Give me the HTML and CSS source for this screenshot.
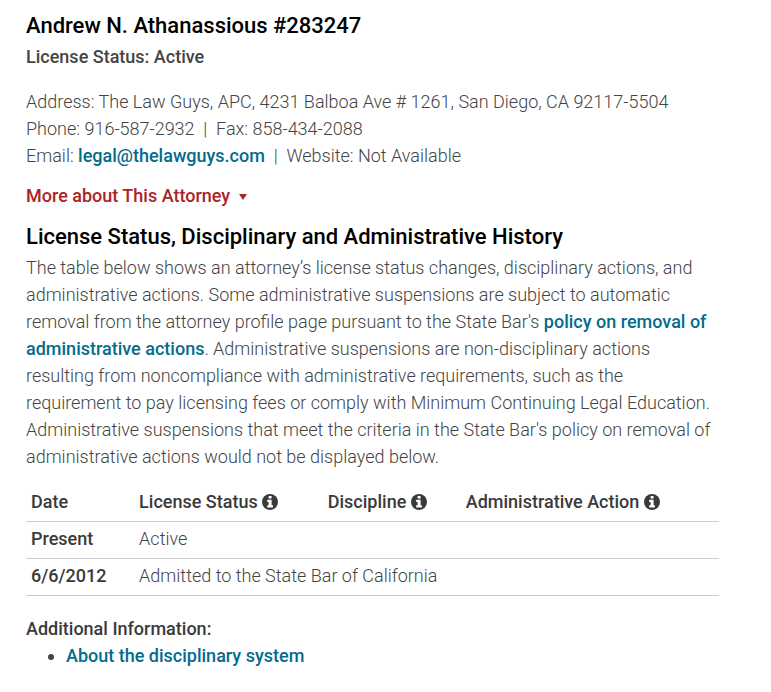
FILE: index.html
```html
<!DOCTYPE html>
<html lang="en">
<head>
    <meta charset="UTF-8">
    <meta name="viewport" content="width=device-width, initial-scale=1.0">
    <title>Attorney Profile</title>
    <link rel="stylesheet" href="styles.css">
</head>
<body>
    <main class="profile">
        <h1 class="title">Andrew N. Athanassious #283247</h1>
        <p class="status">License Status: Active</p>

        <address class="contact">
            <p>Address: The Law Guys, APC, 4231 Balboa Ave # 1261, San Diego, CA 92117-5504</p>
            <p>Phone: 916-587-2932 &nbsp;|&nbsp; Fax: 858-434-2088</p>
            <p>Email: <a href="mailto:legal@thelawguys.com">legal@thelawguys.com</a> &nbsp;|&nbsp; Website: Not Available</p>
        </address>

        <button type="button" class="more">More about This Attorney <span class="caret"></span></button>

        <h2 class="title">License Status, Disciplinary and Administrative History</h2>
        <p class="intro">The table below shows an attorney’s license status changes, disciplinary actions, and administrative actions. Some administrative suspensions are subject to automatic removal from the attorney profile page pursuant to the State Bar's <a href="#">policy on removal of administrative actions</a>. Administrative suspensions are non-disciplinary actions resulting from noncompliance with administrative requirements, such as the requirement to pay licensing fees or comply with Minimum Continuing Legal Education. Administrative suspensions that meet the criteria in the State Bar's policy on removal of administrative actions would not be displayed below.</p>

        <svg class="symbols" aria-hidden="true">
            <symbol id="info" viewBox="0 0 16 16">
                <circle cx="8" cy="8" r="8" fill="#3a3a3a"/>
                <path fill="#fff" d="M6.6 2h3v2.6h-3zM5.2 5.8h4.4v5.4h1.3v2.2H5.2v-2.2h1.4V8H5.2z"/>
            </symbol>
        </svg>

        <table class="history">
            <thead>
                <tr>
                    <th>Date</th>
                    <th>License Status <svg class="info"><use href="#info"/></svg></th>
                    <th>Discipline <svg class="info"><use href="#info"/></svg></th>
                    <th>Administrative Action <svg class="info"><use href="#info"/></svg></th>
                </tr>
            </thead>
            <tbody>
                <tr>
                    <th>Present</th>
                    <td colspan="3">Active</td>
                </tr>
                <tr>
                    <th>6/6/2012</th>
                    <td colspan="3">Admitted to the State Bar of California</td>
                </tr>
            </tbody>
        </table>

        <p class="additional">Additional Information:</p>
        <ul class="links">
            <li><a href="#">About the disciplinary system</a></li>
        </ul>
    </main>
</body>
</html>
```
FILE: styles.css
```css
body {
    margin: 0;
    background: #fff;
    color: #444;
    font-family: Roboto, sans-serif;
    font-size: 18px;
    font-weight: 300;
    line-height: 27px;
}
.profile {
    padding: 12px 52px 12px 26px;
}
h1, h2, p {
    margin: 0;
}
.title {
    color: #000;
    font-size: 22px;
    font-weight: 500;
    line-height: 27px;
}
.status {
    margin: 4px 0 18px;
    font-weight: 500;
}
.contact {
    font-style: normal;
}
a {
    color: #046b8c;
    font-weight: 500;
    text-decoration: none;
}
a:hover {
    text-decoration: underline;
}
.more {
    display: block;
    margin: 13px 0 14px;
    padding: 0;
    border: none;
    background: none;
    color: #ab2328;
    font: inherit;
    font-weight: 500;
    cursor: pointer;
}
.caret {
    display: inline-block;
    margin-left: 4px;
    border: 4px solid transparent;
    border-top: 6px solid #ab2328;
    border-bottom: 0;
    vertical-align: 2px;
}
.intro {
    margin-top: 4px;
}
.symbols {
    display: none;
}
.history {
    width: 100%;
    margin: 15px 0 19px;
    border-collapse: collapse;
    text-align: left;
}
.history th,
.history td {
    padding: 3px 5px 6px;
    border-bottom: 1px solid #ccc;
}
.history th {
    color: #3a3a3a;
    font-weight: 500;
    white-space: nowrap;
}
.info {
    width: 16px;
    height: 16px;
    vertical-align: -2px;
}
.additional {
    color: #3a3a3a;
    font-weight: 500;
}
.links {
    margin: 0;
    padding-left: 40px;
}
```
